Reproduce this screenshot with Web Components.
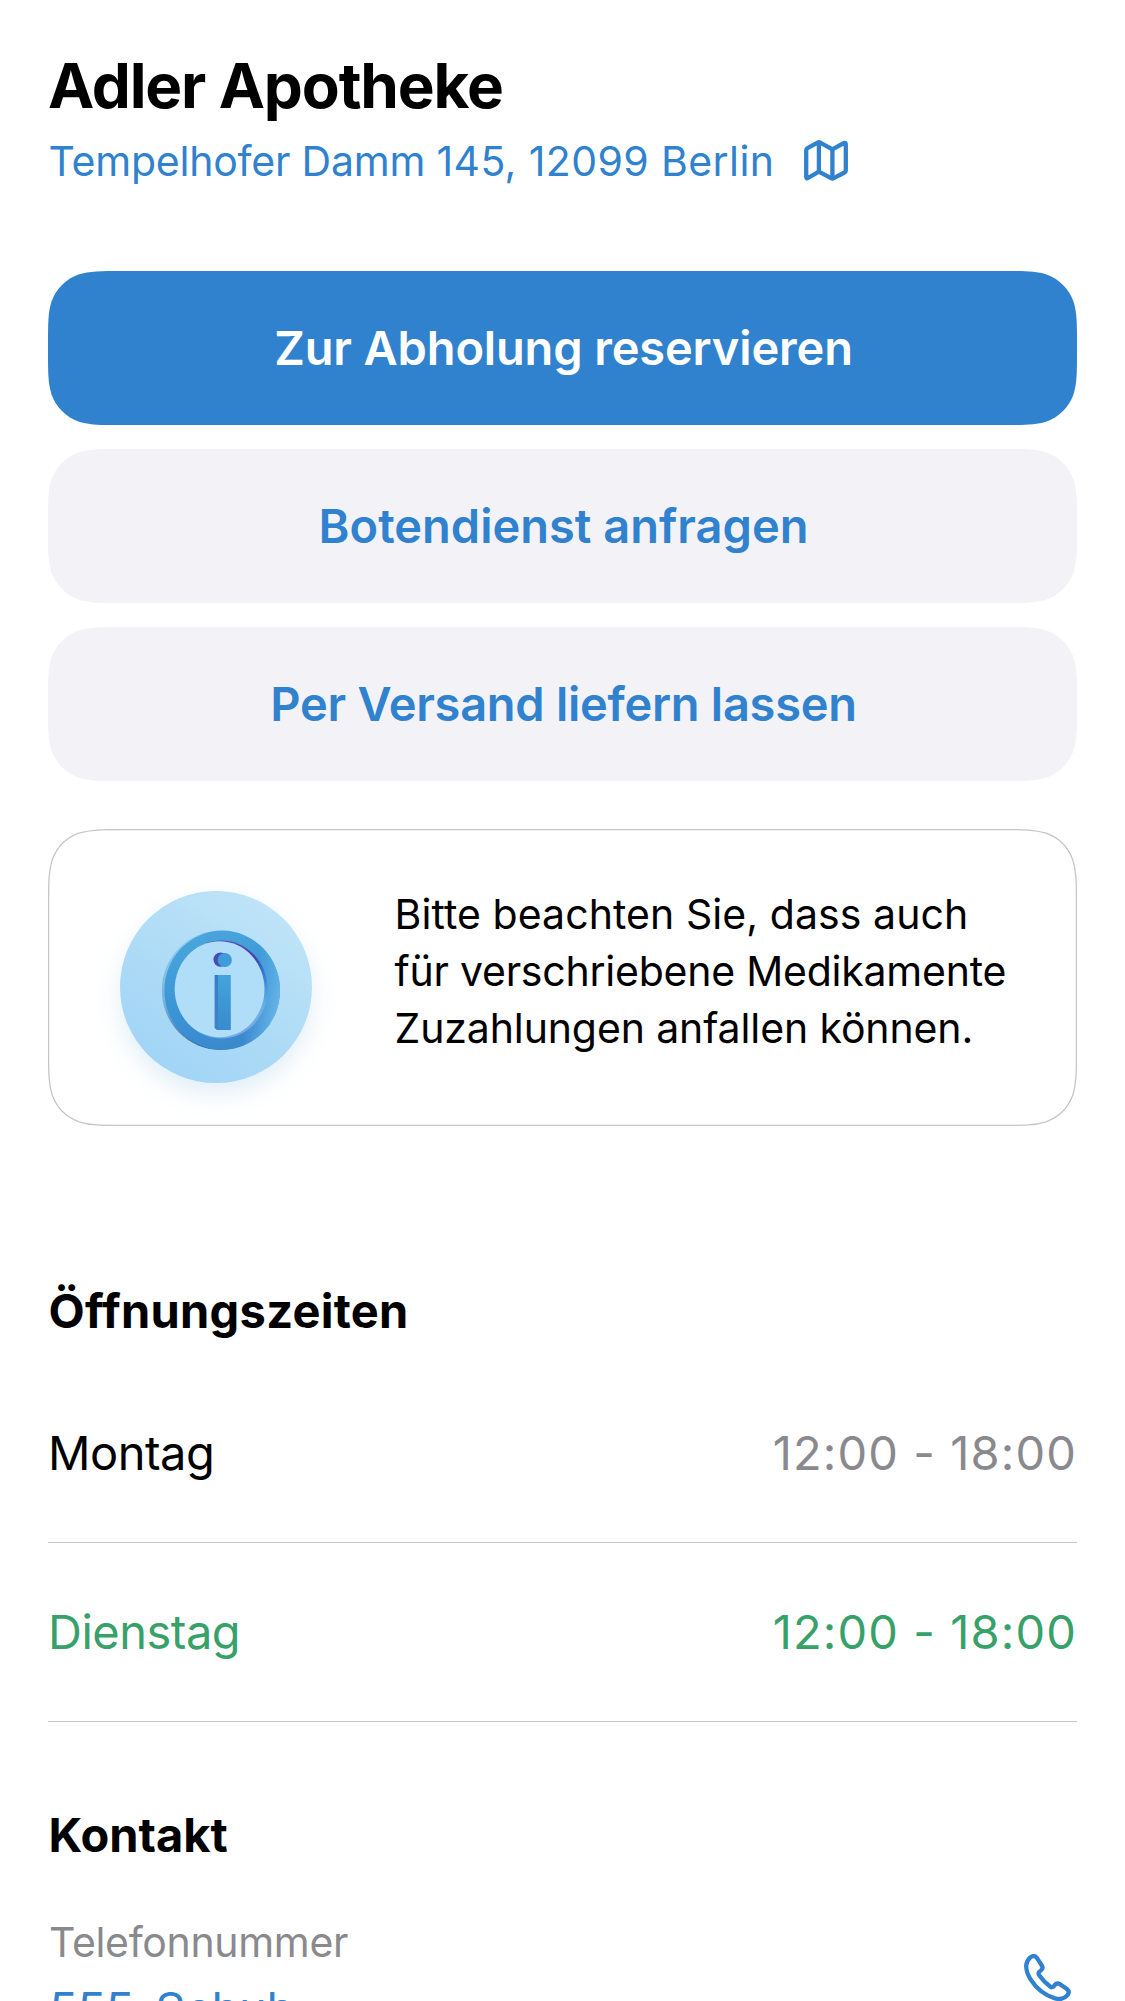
<!DOCTYPE html>
<html lang="de">
<head>
<meta charset="utf-8">
<title>Adler Apotheke</title>
<style>
  html { background: #fff; }
  body { margin: 0; height: 2001px; overflow: hidden; background: #fff; color: #000; font-family: Inter, "Liberation Sans", sans-serif; }
</style>
</head>
<body>
<pharmacy-page>
  <pharmacy-header slot="header">
    <span slot="name">Adler Apotheke</span>
    <span slot="address"><span style="letter-spacing:-.22px">Tempelhofer Damm </span><span style="letter-spacing:.4px">145, 12099 Berlin</span></span>
  </pharmacy-header>
  <action-button primary style="--track:-.15px">Zur Abholung reservieren</action-button>
  <action-button>Botendienst anfragen</action-button>
  <action-button style="--track:-.27px">Per Versand liefern lassen</action-button>
  <notice-card slot="notice">
    <div style="letter-spacing:.07px">Bitte beachten Sie, dass auch</div>
    <div style="letter-spacing:-.23px">für verschriebene Medikamente</div>
    <div style="letter-spacing:-.12px">Zuzahlungen anfallen können.</div>
  </notice-card>
  <page-section slot="hours">
    <span slot="title" style="letter-spacing:.27px">Öffnungszeiten</span>
    <hours-row><span slot="day">Montag</span>12:00 - 18:00</hours-row>
    <hours-row open><span slot="day">Dienstag</span>12:00 - 18:00</hours-row>
  </page-section>
  <page-section slot="contact" style="--gap:54px">
    <span slot="title">Kontakt</span>
    <contact-row><span slot="label">Telefonnummer</span>555-Schuh</contact-row>
  </page-section>
</pharmacy-page>

<script>
const define = (name, html, setup) => {
  const template = document.createElement('template');
  template.innerHTML = html;
  customElements.define(name, class extends HTMLElement {
    constructor() {
      super();
      this.attachShadow({ mode: 'open' }).append(template.content.cloneNode(true));
    }
    connectedCallback() { if (setup) setup(this); }
  });
};

// Rounded rectangle with continuous-curvature corners.
const smoothRect = (x, y, w, h, r) => {
  const a = 1.52866 * r, b = 1.08849 * r, c = .86841 * r, d = .63149 * r,
        e = .07491 * r, f = .37282 * r, g = .16906 * r;
  const R = x + w, B = y + h;
  return `M${x + a} ${y}L${R - a} ${y}` +
    `C${R - b} ${y} ${R - c} ${y} ${R - d} ${y + e}C${R - f} ${y + g} ${R - g} ${y + f} ${R - e} ${y + d}C${R} ${y + c} ${R} ${y + b} ${R} ${y + a}` +
    `L${R} ${B - a}C${R} ${B - b} ${R} ${B - c} ${R - e} ${B - d}C${R - g} ${B - f} ${R - f} ${B - g} ${R - d} ${B - e}C${R - c} ${B} ${R - b} ${B} ${R - a} ${B}` +
    `L${x + a} ${B}C${x + b} ${B} ${x + c} ${B} ${x + d} ${B - e}C${x + f} ${B - g} ${x + g} ${B - f} ${x + e} ${B - d}C${x} ${B - c} ${x} ${B - b} ${x} ${B - a}` +
    `L${x} ${y + a}C${x} ${y + b} ${x} ${y + c} ${x + e} ${y + d}C${x + g} ${y + f} ${x + f} ${y + g} ${x + d} ${y + e}C${x + c} ${y} ${x + b} ${y} ${x + a} ${y}Z`;
};

define('smooth-box', `
  <style>
    :host { position: absolute; inset: 0; z-index: -1; }
    svg { display: block; width: 100%; height: 100%; }
    path { fill: var(--box-fill, none); stroke: var(--box-stroke, none); stroke-width: 1.3; }
  </style>
  <svg><path/></svg>`, el => {
    const draw = () => {
      const inset = el.hasAttribute('outlined') ? .6 : 0;
      el.shadowRoot.querySelector('path').setAttribute('d',
        smoothRect(inset, inset, el.offsetWidth - 2 * inset, el.offsetHeight - 2 * inset, 48));
    };
    draw();
    new ResizeObserver(draw).observe(el);
  });

define('map-icon', `
  <style>:host { display: block; width: 44px; height: 41px; margin-bottom: 2px; } svg { display: block; }</style>
  <svg width="44" height="41" viewBox="0 0 44 41" fill="none" stroke="#3182ce" stroke-width="4.3" stroke-linejoin="round" stroke-linecap="round">
    <path d="M2.2 10.4Q2.2 8.9 3.5 8.1L13.6 2.6Q14.9 1.9 16.2 2.6L27.1 8.6Q28.4 9.3 29.7 8.6L40 3Q41.8 2.4 41.8 4.4V30.4Q41.8 31.8 40.6 32.5L29.7 38.2Q28.4 38.9 27.1 38.2L16.2 32.4Q14.9 31.7 13.6 32.4L4 38Q2.2 38.8 2.2 36.8Z"/>
    <path d="M14.9 3V31.5M28.4 10V38.2"/>
  </svg>`);

define('phone-icon', `
  <style>:host { display: block; width: 48px; height: 48px; } svg { display: block; }</style>
  <svg width="48" height="48" viewBox="0 0 48 48" fill="none" stroke="#3182ce" stroke-width="4.3" stroke-linejoin="round">
    <path d="M6.3 3.4Q10 .6 12.7 3.6L17.9 11.6Q19.6 14.7 16.6 16.8C14.6 18.1 13.9 19.5 15.2 21.2Q20 28 26.4 32.7C28 33.8 29.4 33.2 30.8 30.9Q33 28.4 36 30.2L43.3 35.3Q46 37.6 43.5 41.2C40.5 44.8 36 45.7 31 44.4Q16 40 6.7 25.7Q2 18 2.2 11.6Q2.7 6.6 6.3 3.4Z"/>
  </svg>`);

define('info-badge', `
  <style>:host { display: block; width: 240px; height: 240px; } svg { display: block; overflow: visible; }</style>
  <svg width="240" height="240" viewBox="0 0 240 240">
    <defs>
      <linearGradient id="disc" x1=".8" y1="0.05" x2=".2" y2=".95"><stop stop-color="#c0e4f8"/><stop offset=".5" stop-color="#afdcf6"/><stop offset="1" stop-color="#a1d4f6"/></linearGradient>
      <linearGradient id="ring" x1=".3" y1="0" x2=".6" y2="1"><stop stop-color="#49a7dc"/><stop offset=".5" stop-color="#3b96d6"/><stop offset="1" stop-color="#3a88cd"/></linearGradient>
      <linearGradient id="right" x1="0" y1=".4" x2="1" y2=".6"><stop offset=".75" stop-color="#66b5e9" stop-opacity="0"/><stop offset="1" stop-color="#66b5e9"/></linearGradient>
      <linearGradient id="side" x1=".2" y1="0" x2=".5" y2="1"><stop stop-color="#93d2ee"/><stop offset=".5" stop-color="#76b3d8"/><stop offset="1" stop-color="#2c66ab"/></linearGradient>
      <linearGradient id="wall" x1=".3" y1="0" x2=".8" y2="1"><stop stop-color="#6b48bd"/><stop offset=".36" stop-color="#473dae"/><stop offset=".54" stop-color="#347bd0"/><stop offset=".8" stop-color="#63b3e8"/><stop offset="1" stop-color="#8f9fe0"/></linearGradient>
      <linearGradient id="stem" x1="0" y1="0" x2="0" y2="1"><stop stop-color="#45a3dc"/><stop offset="1" stop-color="#378bce"/></linearGradient>
      <linearGradient id="stemside" x1="0" y1="0" x2="0" y2="1"><stop stop-color="#397dca"/><stop offset="1" stop-color="#4081ca"/></linearGradient>
      <filter id="soft" x="-40%" y="-40%" width="180%" height="180%"><feGaussianBlur stdDeviation="13"/></filter>
      <filter id="edge"><feGaussianBlur stdDeviation=".7"/></filter>
    </defs>
    <circle cx="116" cy="128" r="94" fill="#b3d6ea" opacity=".45" filter="url(#soft)"/>
    <circle cx="116" cy="117" r="96" fill="url(#disc)"/>
    <ellipse cx="119.8" cy="120.2" rx="58" ry="59.5" fill="url(#side)" filter="url(#edge)"/>
    <ellipse cx="122.2" cy="120.2" rx="57.8" ry="59.6" fill="url(#ring)"/>
    <ellipse cx="122.2" cy="120.2" rx="57.8" ry="59.6" fill="url(#right)"/>
    <ellipse cx="121.4" cy="119.5" rx="46.2" ry="49" fill="url(#wall)" filter="url(#edge)"/>
    <ellipse cx="119.6" cy="119.2" rx="44.9" ry="48" fill="#b0ddf7"/>
    <circle cx="120.6" cy="89.6" r="7.2" fill="#464db5"/>
    <circle cx="124.8" cy="90" r="7.1" fill="#3d9cd9"/>
    <path d="M114.6 105H119V160H117L114.6 158Z" fill="url(#stemside)"/>
    <path d="M118 105H130.8V160H118Z" fill="url(#stem)"/>
  </svg>`);

define('pharmacy-header', `
  <style>
    :host { display: flex; flex-direction: column; gap: 13px; }
    h1 { margin: 1px 0 0; font-size: 62px; line-height: 74px; font-weight: 700; letter-spacing: -1.15px; white-space: nowrap; }
    .address { display: flex; align-items: center; gap: 30px; margin-left: .5px; color: #3182ce; font-size: 41px; line-height: 50px; white-space: nowrap; }
  </style>
  <h1><slot name="name"></slot></h1>
  <div class="address"><slot name="address"></slot><map-icon></map-icon></div>`);

define('action-button', `
  <style>
    :host { display: block; }
    button { position: relative; z-index: 0; display: flex; align-items: center; justify-content: center; width: 100%; height: 154px; padding: 0 0 0 2px; border: 0; background: none; font: 600 47px/56px Inter, "Liberation Sans", sans-serif; letter-spacing: var(--track, 0); color: #3182ce; --box-fill: #f2f2f7; }
    :host([primary]) button { color: #fff; --box-fill: #3182ce; }
  </style>
  <button><smooth-box></smooth-box><slot></slot></button>`);

define('notice-card', `
  <style>
    :host { position: relative; z-index: 0; display: flex; box-sizing: border-box; height: 297px; padding: 41px 0 0 52px; --box-stroke: #c6c6c8; }
    .text { margin: 16px 0 0 54.5px; font-size: 41px; line-height: 57px; white-space: nowrap; }
  </style>
  <smooth-box outlined></smooth-box>
  <info-badge></info-badge>
  <div class="text"><slot></slot></div>`);

define('page-section', `
  <style>
    :host { display: block; }
    h2 { margin: 0 0 var(--gap, 25px) .5px; font-size: 47px; line-height: 56px; font-weight: 700; }
  </style>
  <h2><slot name="title"></slot></h2>
  <slot></slot>`);

define('hours-row', `
  <style>
    :host { display: flex; align-items: center; justify-content: space-between; box-sizing: border-box; height: 179px; border-bottom: 1px solid #c6c6c8; font-size: 47px; line-height: 56px; }
    .day { letter-spacing: -.5px; }
    .time { color: #8a8a8e; letter-spacing: 1.12px; }
    :host([open]), :host([open]) .time { color: #38a169; }
  </style>
  <span class="day"><slot name="day"></slot></span><span class="time"><slot></slot></span>`);

define('contact-row', `
  <style>
    :host { display: flex; justify-content: space-between; }
    .text { display: flex; flex-direction: column; gap: 14px; margin-left: 1px; }
    .label { color: #8a8a8e; font-size: 41px; line-height: 50px; letter-spacing: -.33px; }
    .value { color: #3182ce; font-size: 47px; line-height: 56px; letter-spacing: -.3px; }
    phone-icon { margin: 37px 5px 0 0; }
  </style>
  <div class="text"><span class="label"><slot name="label"></slot></span><span class="value"><slot></slot></span></div>
  <phone-icon></phone-icon>`);

define('pharmacy-page', `
  <style>
    :host { display: flex; flex-direction: column; padding: 48px 48px 0; }
    .actions { display: flex; flex-direction: column; gap: 24px; margin: 85px 0 48px; }
    .hours { margin-top: 157px; }
    .contact { margin-top: 85px; }
  </style>
  <slot name="header"></slot>
  <div class="actions"><slot></slot></div>
  <slot name="notice"></slot>
  <div class="hours"><slot name="hours"></slot></div>
  <div class="contact"><slot name="contact"></slot></div>`);
</script>
</body>
</html>
